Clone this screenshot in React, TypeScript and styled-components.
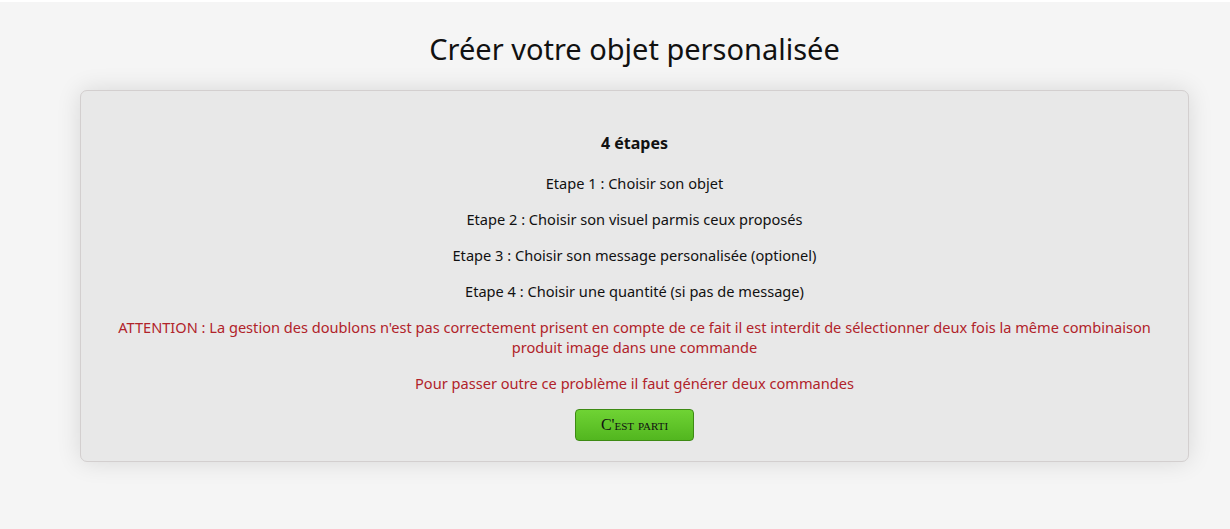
import React from "react";
import styled, { createGlobalStyle } from "styled-components";

const Global = createGlobalStyle`
  html, body { margin: 0; padding: 0; background: #f5f5f5; }
  body { font-family: "Noto Sans", "Open Sans", sans-serif; color: #111; }
`;

const Page = styled.div`
  border-top: 2px solid #fff;
  padding: 0 41px 60px 80px;
`;

const Title = styled.h1`
  margin: 0 0 26px;
  padding-top: 27px;
  height: 62px;
  box-sizing: border-box;
  text-align: center;
  font-weight: 400;
  font-size: 29px;
  line-height: 40px;
  color: #111;
`;

const Card = styled.div`
  background: #e8e8e8;
  border: 1px solid #d3cfcf;
  border-radius: 7px;
  box-shadow: 0 0 24px rgba(0, 0, 0, 0.12);
  padding: 40px 20px 20px;
  display: flex;
  flex-direction: column;
  align-items: center;
  text-align: center;
`;

const Heading = styled.h3`
  margin: 0 0 18px;
  font-size: 16px;
  font-weight: 700;
  line-height: 24px;
`;

const Step = styled.p<{ $warn?: boolean }>`
  margin: 0 0 16px;
  font-size: 14.6px;
  line-height: 20px;
  color: ${(p) => (p.$warn ? "#b1232a" : "#111")};
`;

const Button = styled.button`
  width: 119px;
  height: 32px;
  border: 1px solid #3d8a14;
  border-radius: 4px;
  background: linear-gradient(#6fd334, #52b61f);
  font-family: "Liberation Serif", "DejaVu Serif", serif;
  font-variant: small-caps;
  font-size: 16px;
  color: #111;
  cursor: pointer;
`;

export default function App() {
  return (
    <>
      <Global />
      <Page>
        <Title>Créer votre objet personalisée</Title>
        <Card>
          <Heading>4 étapes</Heading>
          <Step>Etape 1 : Choisir son objet</Step>
          <Step>Etape 2 : Choisir son visuel parmis ceux proposés</Step>
          <Step>Etape 3 : Choisir son message personalisée (optionel)</Step>
          <Step>Etape 4 : Choisir une quantité (si pas de message)</Step>
          <Step $warn>
            ATTENTION : La gestion des doublons n'est pas correctement prisent en compte de ce fait il est interdit de sélectionner deux fois la même combinaison produit image dans une commande
          </Step>
          <Step $warn>Pour passer outre ce problème il faut générer deux commandes</Step>
          <Button>C'est parti</Button>
        </Card>
      </Page>
    </>
  );
}
